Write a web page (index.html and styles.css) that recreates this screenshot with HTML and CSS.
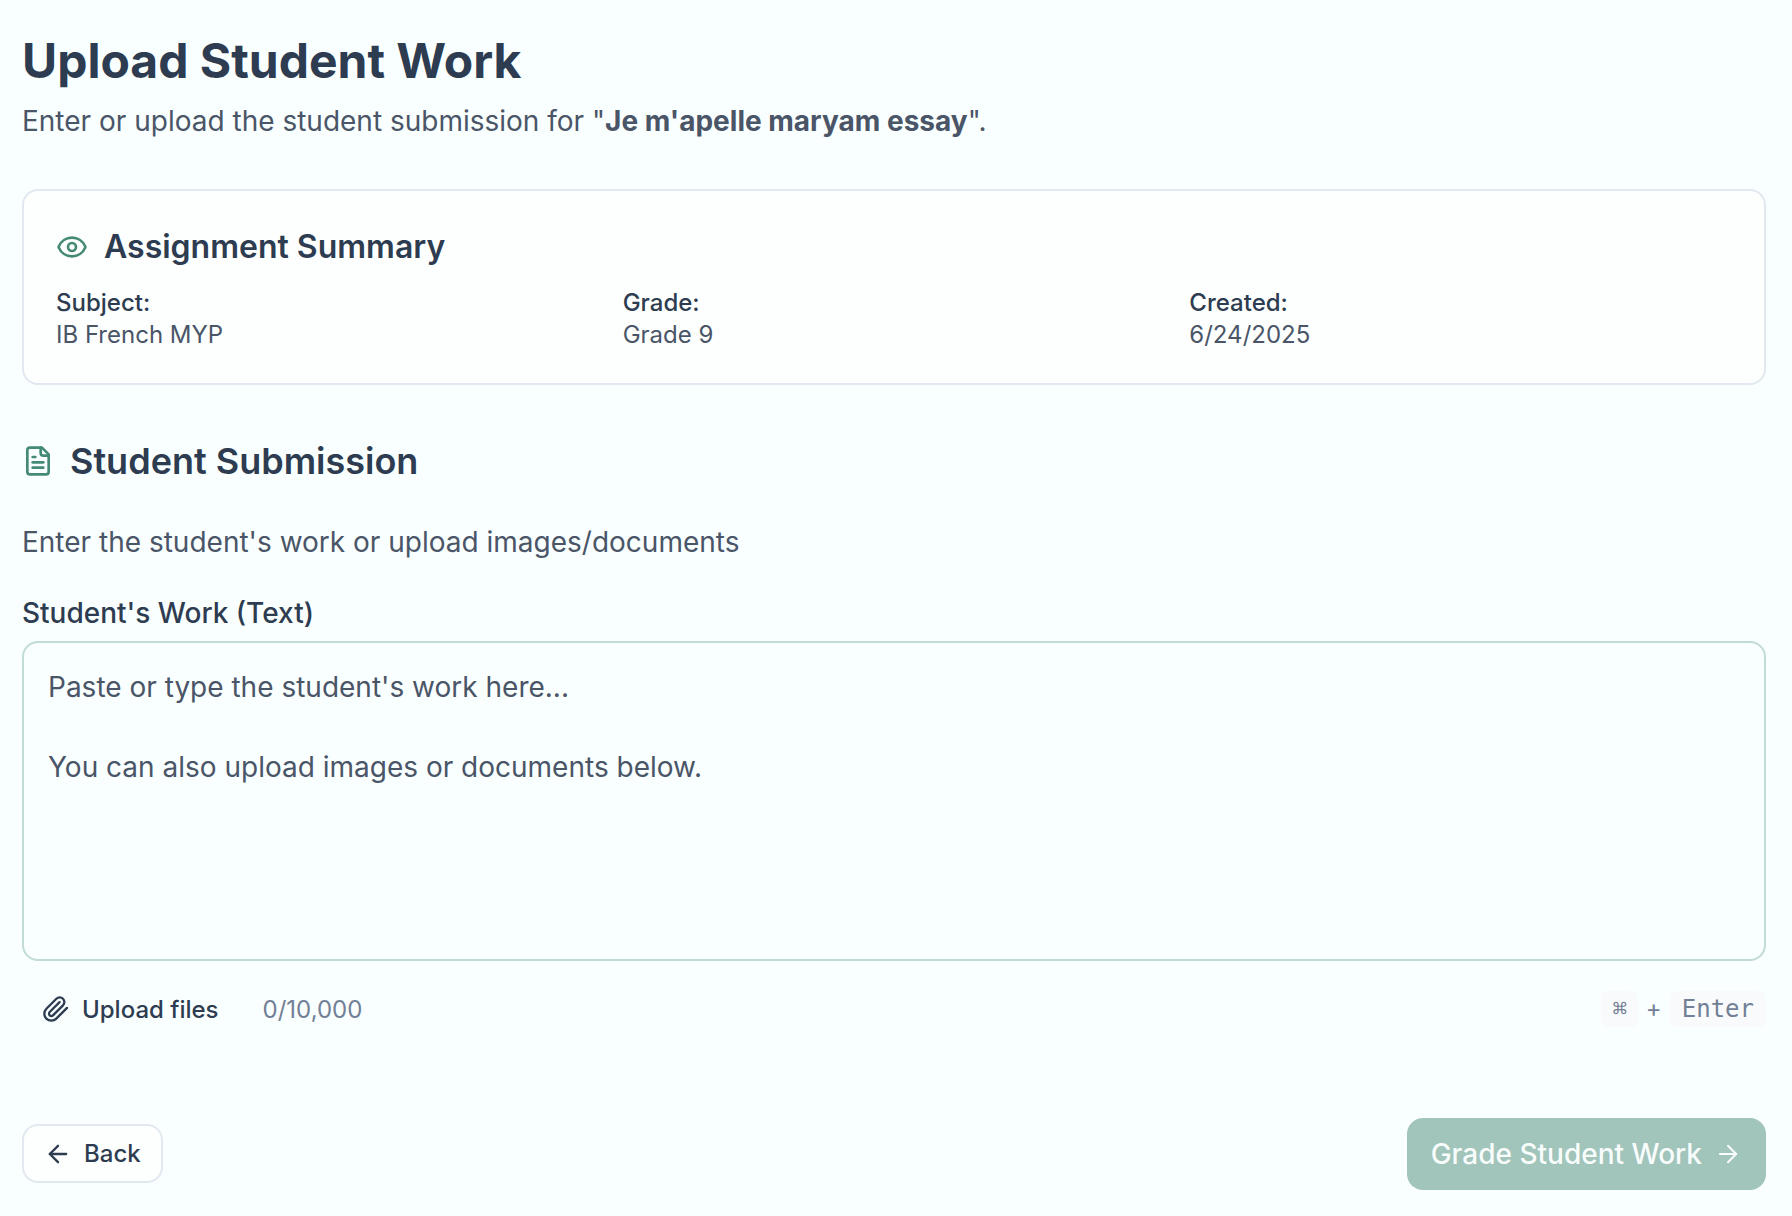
FILE: index.html
```html
<!DOCTYPE html>
<html lang="en">
<head>
  <meta charset="UTF-8" />
  <title>Upload Student Work</title>
  <link rel="stylesheet" href="styles.css">
</head>
<body>
  <main class="page">
    <header class="page-head">
      <h1>Upload Student Work</h1>
      <p>Enter or upload the student submission for "<strong>Je m'apelle maryam essay</strong>".</p>
    </header>

    <!-- assignment summary card -->
    <section class="summary">
      <h2 class="summary-title">
        <svg class="icon-green" width="32" height="32" viewBox="0 0 24 24" fill="none" stroke="currentColor" stroke-width="2" stroke-linecap="round" stroke-linejoin="round"><path d="M2.06 12.35a1 1 0 0 1 0-.7 10.75 10.75 0 0 1 19.88 0 1 1 0 0 1 0 .7 10.75 10.75 0 0 1-19.88 0"/><circle cx="12" cy="12" r="3"/></svg>
        Assignment Summary
      </h2>
      <div class="summary-grid">
        <div><div class="term">Subject:</div><div class="value">IB French MYP</div></div>
        <div><div class="term">Grade:</div><div class="value">Grade 9</div></div>
        <div><div class="term">Created:</div><div class="value">6/24/2025</div></div>
      </div>
    </section>

    <!-- submission -->
    <section class="submission">
      <h2 class="submission-title">
        <svg class="icon-green" width="32" height="32" viewBox="0 0 24 24" fill="none" stroke="currentColor" stroke-width="2" stroke-linecap="round" stroke-linejoin="round"><path d="M15 2H6a2 2 0 0 0-2 2v16a2 2 0 0 0 2 2h12a2 2 0 0 0 2-2V7Z"/><path d="M14 2v4a2 2 0 0 0 2 2h4"/><path d="M10 9H8"/><path d="M16 13H8"/><path d="M16 17H8"/></svg>
        Student Submission
      </h2>
      <p class="hint">Enter the student's work or upload images/documents</p>
      <label class="field-label" for="work">Student's Work (Text)</label>
      <textarea class="work" id="work" placeholder="Paste or type the student's work here...&#10;&#10;You can also upload images or documents below."></textarea>
      <div class="tools">
        <button class="upload" type="button">
          <svg width="28" height="28" viewBox="0 0 24 24" fill="none" stroke="currentColor" stroke-width="2" stroke-linecap="round" stroke-linejoin="round"><path d="m21.44 11.05-9.19 9.19a6 6 0 0 1-8.49-8.49l8.57-8.57A4 4 0 1 1 18 8.84l-8.59 8.57a2 2 0 0 1-2.83-2.83l8.49-8.48"/></svg>
          Upload files
        </button>
        <span class="count">0/10,000</span>
        <span class="keys"><kbd class="cmd">⌘</kbd><span class="plus">+</span><kbd>Enter</kbd></span>
      </div>
    </section>

    <div class="actions">
      <button class="back" type="button">
        <svg width="28" height="28" viewBox="0 0 24 24" fill="none" stroke="currentColor" stroke-width="2" stroke-linecap="round" stroke-linejoin="round"><path d="m12 19-7-7 7-7"/><path d="M19 12H5"/></svg>
        Back
      </button>
      <button class="grade" type="button">
        Grade Student Work
        <svg width="28" height="28" viewBox="0 0 24 24" fill="none" stroke="currentColor" stroke-width="1.75" stroke-linecap="round" stroke-linejoin="round"><path d="M5 12h14"/><path d="m12 5 7 7-7 7"/></svg>
      </button>
    </div>
  </main>
</body>
</html>
```

FILE: styles.css
```css
:root {
  --bg: #f9fffe;
  --text: #2d3c50;
  --muted: #4a5568;
  --faint: #718096;
  --green: #458a74;
  --line: #e2e8f0;
}
* { box-sizing: border-box; margin: 0; padding: 0; }
body {
  font-family: Inter, "Liberation Sans", sans-serif;
  background: var(--bg);
  color: var(--text);
}
button { font-family: inherit; cursor: pointer; }
.page {
  padding: 29px 26px 0 22px;
}
h1 {
  font-size: 48px;
  line-height: 64px;
  font-weight: 700;
}
.page-head p {
  font-size: 28px;
  line-height: 36px;
  color: var(--muted);
  margin-top: 10px;
}
.page-head strong { font-weight: 700; }

/* summary card */
.summary {
  margin-top: 50px;
  height: 196px;
  border: 2px solid var(--line);
  border-radius: 16px;
  padding: 36px 32px;
  background: #fdfffe;
}
.summary-title, .submission-title {
  display: flex;
  align-items: center;
  line-height: 40px;
  font-weight: 600;
}
.summary-title { gap: 16px; font-size: 32px; }
.submission-title { gap: 16px; font-size: 36px; }
.icon-green { color: var(--green); flex: none; }
.summary-grid {
  display: grid;
  grid-template-columns: repeat(3, 1fr);
  gap: 24px;
  margin-top: 20px;
  font-size: 24px;
  line-height: 32px;
}
.term { font-weight: 500; }
.value { color: var(--muted); }

/* submission */
.submission { margin-top: 56px; }
.hint {
  font-size: 28px;
  line-height: 36px;
  color: var(--muted);
  margin-top: 43px;
}
.field-label {
  display: block;
  font-size: 28px;
  line-height: 36px;
  font-weight: 500;
  margin-top: 35px;
}
.work {
  display: block;
  width: 100%;
  height: 320px;
  margin-top: 10px;
  padding: 24px;
  border: 2px solid #c1dcd4;
  border-radius: 16px;
  background: var(--bg);
  font-family: inherit;
  font-size: 28px;
  line-height: 40px;
  color: var(--text);
  resize: none;
  outline: none;
}
.work::placeholder { color: var(--muted); opacity: 1; }
.tools {
  display: flex;
  align-items: center;
  margin-top: 24px;
  height: 48px;
}
.upload {
  display: flex;
  align-items: center;
  gap: 12px;
  padding-left: 20px;
  border: none;
  background: none;
  color: var(--text);
  font-size: 24px;
  font-weight: 500;
}
.count {
  margin-left: 44px;
  font-size: 24px;
  color: var(--faint);
}
.keys {
  margin-left: auto;
  display: flex;
  align-items: center;
  gap: 8px;
  font-size: 24px;
  color: var(--faint);
}
.plus { padding-bottom: 2px; }
kbd {
  font-family: "DejaVu Sans Mono", "Liberation Mono", monospace;
  font-size: 24px;
  background: #f9fafb;
  border-radius: 8px;
  padding: 0 12px;
  height: 36px;
  line-height: 37px;
}
kbd.cmd { padding: 0 11px; }

/* bottom buttons */
.actions {
  display: flex;
  justify-content: space-between;
  align-items: center;
  margin-top: 85px;
}
.back {
  display: flex;
  align-items: center;
  gap: 12px;
  height: 59px;
  margin-bottom: 1px;
  padding: 0 20px;
  border: 2px solid var(--line);
  border-radius: 16px;
  background: #fdfffe;
  color: var(--text);
  font-size: 24px;
  font-weight: 500;
}
.grade {
  display: flex;
  align-items: center;
  gap: 12px;
  height: 72px;
  padding: 0 24px;
  border: none;
  border-radius: 16px;
  background: #a1c4bb;
  color: #f8fcfb;
  font-size: 28px;
  font-weight: 500;
}
```
